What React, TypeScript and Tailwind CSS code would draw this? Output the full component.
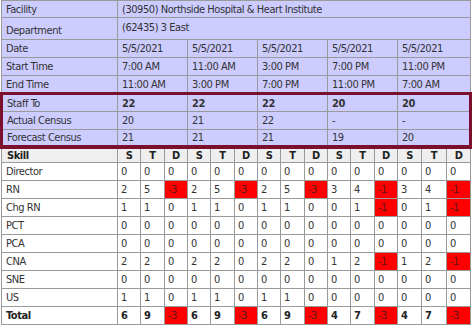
import React from "react";

type Cell = number | string;

const shifts = [
  { date: "5/5/2021", start: "7:00 AM", end: "11:00 AM", staff: "22", actual: "20", forecast: "21" },
  { date: "5/5/2021", start: "11:00 AM", end: "3:00 PM", staff: "22", actual: "21", forecast: "21" },
  { date: "5/5/2021", start: "3:00 PM", end: "7:00 PM", staff: "22", actual: "22", forecast: "21" },
  { date: "5/5/2021", start: "7:00 PM", end: "11:00 PM", staff: "20", actual: "-", forecast: "19" },
  { date: "5/5/2021", start: "11:00 PM", end: "7:00 AM", staff: "20", actual: "-", forecast: "20" },
];

const skills: { name: string; values: Cell[] }[] = [
  { name: "Director", values: [0, 0, 0, 0, 0, 0, 0, 0, 0, 0, 0, 0, 0, 0, 0] },
  { name: "RN", values: [2, 5, -3, 2, 5, -3, 2, 5, -3, 3, 4, -1, 3, 4, -1] },
  { name: "Chg RN", values: [1, 1, 0, 1, 1, 0, 1, 1, 0, 0, 1, -1, 0, 1, -1] },
  { name: "PCT", values: [0, 0, 0, 0, 0, 0, 0, 0, 0, 0, 0, 0, 0, 0, 0] },
  { name: "PCA", values: [0, 0, 0, 0, 0, 0, 0, 0, 0, 0, 0, 0, 0, 0, 0] },
  { name: "CNA", values: [2, 2, 0, 2, 2, 0, 2, 2, 0, 1, 2, -1, 1, 2, -1] },
  { name: "SNE", values: [0, 0, 0, 0, 0, 0, 0, 0, 0, 0, 0, 0, 0, 0, 0] },
  { name: "US", values: [1, 1, 0, 1, 1, 0, 1, 1, 0, 0, 0, 0, 0, 0, 0] },
];

const totals: Cell[] = [6, 9, -3, 6, 9, -3, 6, 9, -3, 4, 7, -3, 4, 7, -3];

const colWidths = [116, 23, 24, 23, 23, 24, 23, 23, 24, 23, 23, 24, 23, 24, 25, 24];

// shared cell looks
const lav = "bg-[#ccccff] border border-[#9a9a9a] px-[4px] text-[#333]";
const maroonL = "border-l-[3px] border-l-[#7a0f2e]";
const maroonR = "border-r-[3px] border-r-[#7a0f2e]";
const maroonT = "border-t-[3px] border-t-[#7a0f2e]";
const maroonB = "border-b-[4px] border-b-[#7a0f2e]";
const grid = "border border-[#9a9a9a]";

const App = () => {
  return (
    <div
      className="bg-white w-[472px] h-[331px] overflow-hidden text-[11px] leading-none tracking-[-0.45px]"
      style={{ fontFamily: '"DejaVu Sans Condensed", "DejaVu Sans", sans-serif' }}
    >
      <table className="table-fixed border-collapse w-[469px]">
        <colgroup>
          {colWidths.map((w, i) => (
            <col key={i} style={{ width: w }} />
          ))}
        </colgroup>
        <tbody>
          <tr className="h-[17px]">
            <td className={lav}>Facility</td>
            <td colSpan={15} className={lav}>
              (30950) Northside Hospital &amp; Heart Institute
            </td>
          </tr>
          <tr className="h-[22px]">
            <td className={`${lav} align-bottom pb-[3px]`}>Department</td>
            <td colSpan={15} className={`${lav} align-top pt-[4px]`}>
              (62435) 3 East
            </td>
          </tr>
          <tr className="h-[18px]">
            <td className={lav}>Date</td>
            {shifts.map((s, i) => (
              <td key={i} colSpan={3} className={lav}>
                {s.date}
              </td>
            ))}
          </tr>
          <tr className="h-[18px]">
            <td className={lav}>Start Time</td>
            {shifts.map((s, i) => (
              <td key={i} colSpan={3} className={lav}>
                {s.start}
              </td>
            ))}
          </tr>
          <tr className="h-[18px]">
            <td className={lav}>End Time</td>
            {shifts.map((s, i) => (
              <td key={i} colSpan={3} className={lav}>
                {s.end}
              </td>
            ))}
          </tr>
        </tbody>
        <tbody>
          <tr className="h-[18px]">
            <td className={`${lav} ${maroonL} ${maroonT}`}>Staff To</td>
            {shifts.map((s, i) => (
              <td key={i} colSpan={3} className={`${lav} font-bold ${maroonT} ${i === 4 ? maroonR : ""}`}>
                {s.staff}
              </td>
            ))}
          </tr>
          <tr className="h-[18px]">
            <td className={`${lav} ${maroonL}`}>Actual Census</td>
            {shifts.map((s, i) => (
              <td key={i} colSpan={3} className={`${lav} ${i === 4 ? maroonR : ""}`}>
                {s.actual}
              </td>
            ))}
          </tr>
          <tr className="h-[17px]">
            <td className={`${lav} ${maroonL} ${maroonB}`}>Forecast Census</td>
            {shifts.map((s, i) => (
              <td key={i} colSpan={3} className={`${lav} ${maroonB} ${i === 4 ? maroonR : ""}`}>
                {s.forecast}
              </td>
            ))}
          </tr>
        </tbody>
        <tbody>
          <tr className="h-[16px]">
            <td className={`bg-[#efefef] ${grid} px-[5px] font-bold text-[#222]`}>Skill</td>
            {Array.from({ length: 15 }).map((_, i) => (
              <td key={i} className={`bg-[#efefef] ${grid} text-center font-bold text-[#222]`}>
                {["S", "T", "D"][i % 3]}
              </td>
            ))}
          </tr>
          {skills.map((row) => (
            <tr key={row.name} className="h-[18px]">
              <td className={`bg-white ${grid} px-[4px] text-[#333]`}>{row.name}</td>
              {row.values.map((v, i) => (
                <td
                  key={i}
                  className={`${grid} px-[3px] ${
                    Number(v) < 0 ? "bg-[#ff0000] text-[#5a1a1a]" : "bg-white text-[#333]"
                  }`}
                >
                  {v}
                </td>
              ))}
            </tr>
          ))}
          <tr className="h-[18px]">
            <td className={`bg-white ${grid} px-[4px] font-bold text-[#222]`}>Total</td>
            {totals.map((v, i) => (
              <td
                key={i}
                className={`${grid} px-[3px] ${
                  Number(v) < 0 ? "bg-[#ff0000] text-[#5a1a1a]" : "bg-white font-bold text-[#222]"
                }`}
              >
                {v}
              </td>
            ))}
          </tr>
        </tbody>
      </table>
    </div>
  );
};

export default App;
